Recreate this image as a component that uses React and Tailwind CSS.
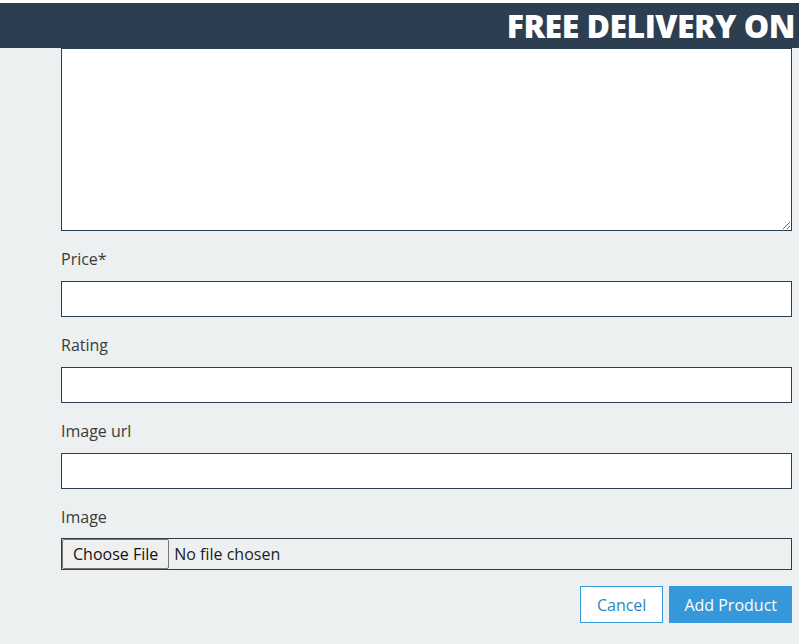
import React from 'react';

const fields = [
  { label: 'Price*', type: 'number' },
  { label: 'Rating', type: 'number' },
  { label: 'Image url', type: 'text' },
];

export default function App() {
  return (
    <div className="min-h-screen bg-[#ecf0f1] font-['Open_Sans',sans-serif] text-[#3b3b3b]">
      <div className="h-[3px] bg-white" />
      <header className="flex h-[45px] items-center justify-end overflow-hidden bg-[#2c3e50] pr-[4px]">
        <span className="whitespace-nowrap text-[32px] font-extrabold leading-none tracking-[-0.5px] text-white">
          FREE DELIVERY ON
        </span>
      </header>

      <form className="pl-[61px] pr-[7px]">
        <textarea className="block h-[183px] w-full border border-[#2c3e50] bg-white outline-none" />

        {fields.map((f) => (
          <div key={f.label}>
            <label className="mt-4 mb-2.5 block text-[16px] leading-6">{f.label}</label>
            <input
              type={f.type}
              className="block h-[36px] w-full border border-[#2c3e50] bg-white px-2 outline-none"
            />
          </div>
        ))}

        <label className="mt-4 mb-[9px] block text-[16px] leading-6">Image</label>
        <input
          type="file"
          className="block h-[32px] w-full border border-[#2c3e50] text-[16px] text-[#222] file:mr-[5px] file:h-[30px] file:rounded-[2px] file:border file:border-[#767676] file:bg-[#efefef] file:px-[10px] file:text-[#111]"
        />

        <div className="mt-[16px] flex justify-end gap-[6px]">
          <button
            type="button"
            className="h-[37px] border border-[#3498db] bg-white px-[16px] text-[16px] text-[#2e86c1]"
          >
            Cancel
          </button>
          <button
            type="submit"
            className="h-[37px] bg-[#3498db] px-[15px] text-[16px] font-medium text-white"
          >
            Add Product
          </button>
        </div>
      </form>
    </div>
  );
}
